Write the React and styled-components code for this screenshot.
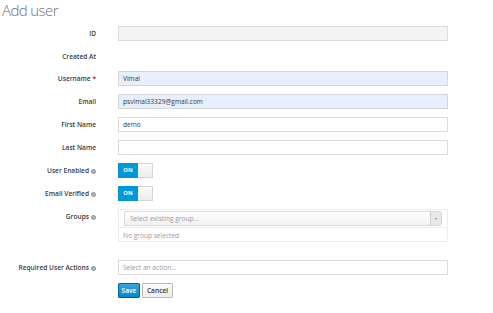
import styled, { createGlobalStyle } from "styled-components";

const GlobalStyle = createGlobalStyle`
  body {
    margin: 0;
    background: #fff;
    font-family: "Open Sans", "Liberation Sans", sans-serif;
    color: #363636;
  }
`;

const Page = styled.div`
  width: 493px;
  height: 313px;
  padding: 0 2px;
  box-sizing: border-box;
`;

const Title = styled.h1`
  margin: 0;
  font-size: 15px;
  font-weight: 300;
  letter-spacing: -0.6px;
  color: #707070;
  line-height: 20px;
`;

const Form = styled.form`
  margin-top: 6px;
  display: flex;
  flex-direction: column;
`;

const Row = styled.div`
  display: grid;
  grid-template-columns: 94px 1fr;
  column-gap: 22px;
  align-items: ${(p) => (p.$top ? "start" : "center")};
  width: 446px;
  margin-bottom: ${(p) => p.$gap || 8}px;
  min-height: ${(p) => p.$h || 15}px;
`;

const Label = styled.label`
  text-align: right;
  font-size: 6.6px;
  font-weight: 600;
  color: #3a3a3a;
  line-height: 15px;
  white-space: nowrap;
`;

const Req = styled.span`
  color: #c00;
`;

const Help = styled.span`
  display: inline-block;
  box-sizing: border-box;
  width: 5px;
  height: 5px;
  border-radius: 50%;
  border: 1px solid #8b8d8f;
  background: #b5b7b9;
  margin-left: 2px;
  vertical-align: -0.5px;
`;

const Input = styled.div`
  height: 15px;
  box-sizing: border-box;
  border: 1px solid ${(p) => (p.$filled ? "#d4d6dc" : "#dcdcdc")};
  background: ${(p) => (p.$disabled ? "#f4f4f4" : p.$filled ? "#e8effc" : "#fff")};
  font-size: 6.6px;
  line-height: 13px;
  padding: 0 4px;
  color: ${(p) => (p.$placeholder ? "#999" : "#363636")};
`;

const Toggle = styled.div`
  display: flex;
  width: 35px;
  height: 15px;
  box-sizing: border-box;
  border: 1px solid #d6d6d6;
`;

const ToggleOn = styled.div`
  flex: 0 0 20px;
  background: #0099d3;
  color: #fff;
  font-size: 5.8px;
  font-weight: 700;
  line-height: 15px;
  text-align: center;
  margin: -1px 0 -1px -1px;
`;

const Knob = styled.div`
  flex: 1;
  background: linear-gradient(#fafafa, #ececec);
`;

const GroupBox = styled.div`
  border: 1px solid #ececec;
  height: 33px;
  box-sizing: border-box;
  padding: 1px 5px 0 5px;
  display: flex;
  flex-direction: column;
`;

const Select = styled.div`
  height: 15px;
  box-sizing: border-box;
  border: 1px solid #d8d8d8;
  border-radius: 2px;
  background: linear-gradient(#ffffff, #f1f1f1);
  display: flex;
  align-items: center;
  font-size: 6.6px;
  color: #999;
  padding-left: 5px;
`;

const SelectText = styled.span`
  flex: 1;
`;

const Arrow = styled.span`
  width: 10px;
  height: 13px;
  border-left: 1px solid #d0d0d0;
  background: #e8e8e8;
  display: flex;
  align-items: center;
  justify-content: center;
  &::after {
    content: "";
    border-left: 1.5px solid transparent;
    border-right: 1.5px solid transparent;
    border-top: 2px solid #888;
  }
`;

const GroupNote = styled.div`
  border-top: 1px solid #ededed;
  margin: 1px -5px 0;
  padding: 0 4px;
  font-size: 6.6px;
  line-height: 15px;
  color: #9a9a9a;
`;

const Buttons = styled.div`
  display: flex;
  gap: 2px;
`;

const Button = styled.button`
  height: 15px;
  padding: 0;
  font-family: inherit;
  font-size: 6.6px;
  font-weight: 600;
  border-radius: 1px;
  border: 1px solid ${(p) => (p.$primary ? "#00659c" : "#bbb")};
  background: ${(p) =>
    p.$primary ? "linear-gradient(#39a5dc, #0088ce)" : "linear-gradient(#fafafa, #ededed)"};
  color: ${(p) => (p.$primary ? "#fff" : "#363636")};
  width: ${(p) => p.$w}px;
`;

const App = () => {
  return (
    <Page>
      <GlobalStyle />
      <Title>Add user</Title>
      <Form>
        <Row>
          <Label>ID</Label>
          <Input $disabled />
        </Row>
        <Row $h={13} $gap={7}>
          <Label>Created At</Label>
          <div />
        </Row>
        <Row>
          <Label>
            Username <Req>*</Req>
          </Label>
          <Input $filled>Vimal</Input>
        </Row>
        <Row>
          <Label>Email</Label>
          <Input $filled>psvimal33329@gmail.com</Input>
        </Row>
        <Row>
          <Label>First Name</Label>
          <Input>demo</Input>
        </Row>
        <Row>
          <Label>Last Name</Label>
          <Input />
        </Row>
        <Row>
          <Label>
            User Enabled<Help />
          </Label>
          <Toggle>
            <ToggleOn>ON</ToggleOn>
            <Knob />
          </Toggle>
        </Row>
        <Row>
          <Label>
            Email Verified<Help />
          </Label>
          <Toggle>
            <ToggleOn>ON</ToggleOn>
            <Knob />
          </Toggle>
        </Row>
        <Row $top $gap={18}>
          <Label>
            Groups<Help />
          </Label>
          <GroupBox>
            <Select>
              <SelectText>Select existing group...</SelectText>
              <Arrow />
            </Select>
            <GroupNote>No group selected</GroupNote>
          </GroupBox>
        </Row>
        <Row>
          <Label>
            Required User Actions<Help />
          </Label>
          <Input $placeholder>Select an action...</Input>
        </Row>
        <Row>
          <div />
          <Buttons>
            <Button $primary $w={22}>Save</Button>
            <Button $w={31}>Cancel</Button>
          </Buttons>
        </Row>
      </Form>
    </Page>
  );
};

export default App;
